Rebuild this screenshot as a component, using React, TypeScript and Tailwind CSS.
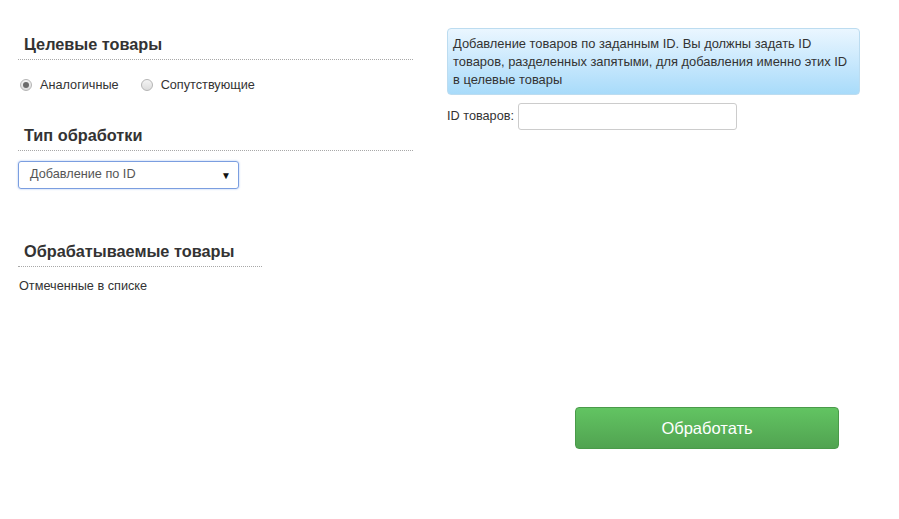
import React from "react";

function Radio({ checked, label }: { checked?: boolean; label: string }) {
  return (
    <label className="flex items-center gap-[8px]">
      <span className="w-[12px] h-[12px] rounded-full border border-[#b5b5b5] bg-gradient-to-b from-[#f4f4f4] to-[#dcdcdc] flex items-center justify-center">
        {checked && <span className="w-[6px] h-[6px] rounded-full bg-[#6b6b6b]" />}
      </span>
      <span>{label}</span>
    </label>
  );
}

function Heading({ children, w }: { children: React.ReactNode; w: string }) {
  return (
    <div className={`${w} border-b border-dotted border-[#a8a8a8] pl-[6px] pb-[5px]`}>
      <h2 className="text-[16.3px] leading-[20px] font-bold text-[#333]">{children}</h2>
    </div>
  );
}

export default function App() {
  return (
    <div
      className="w-[899px] h-[519px] bg-white text-[#333] text-[12px]"
      style={{ fontFamily: '"Liberation Sans", Arial, sans-serif' }}
    >
      <div className="flex pl-[18px] pt-[28px] gap-[34px]">
        <div className="w-[395px] flex flex-col">
          <div className="pt-[6px]">
            <Heading w="w-[395px]">Целевые товары</Heading>
          </div>
          <div className="flex items-center gap-[22px] pl-[2px] mt-[17px] text-[12.7px] leading-[16px]">
            <Radio checked label="Аналогичные" />
            <Radio label="Сопутствующие" />
          </div>
          <div className="mt-[32px]">
            <Heading w="w-[395px]">Тип обработки</Heading>
          </div>
          <div className="mt-[10px] w-[221px] h-[28px] rounded-[3px] border border-[#7b9ee0] shadow-[0_0_2px_rgba(90,140,230,0.6)] flex items-center justify-between pl-[11px] pr-[7px] text-[12.7px] text-[#555]">
            <span>Добавление по ID</span>
            <span className="text-[10px] text-[#111]">▼</span>
          </div>
          <div className="mt-[52px]">
            <Heading w="w-[244px]">Обрабатываемые товары</Heading>
          </div>
          <div className="mt-[11px] pl-[1px] text-[12.7px] leading-[16px]">Отмеченные в списке</div>
        </div>
        <div className="w-[413px] flex flex-col">
          <div className="rounded-[4px] border border-[#bcdcf0] bg-gradient-to-b from-[#eaf6ff] to-[#a8dbfa] px-[5px] pt-[6px] pb-[5px] text-[12.9px] leading-[18px] text-[#333]">
            Добавление товаров по заданным ID. Вы должны задать ID товаров, разделенных запятыми, для добавления именно этих ID в целевые товары
          </div>
          <div className="flex items-center mt-[8px] text-[12.7px]">
            <span>ID товаров:</span>
            <input className="ml-[4px] w-[219px] h-[27px] rounded-[3px] border border-[#cccccc] outline-none" />
          </div>
          <div className="mt-[277px] ml-[128px]">
            <button className="w-[264px] h-[42px] rounded-[4px] border border-[#4a9a4a] bg-gradient-to-b from-[#62c462] to-[#51a351] text-white text-[16.5px]">
              Обработать
            </button>
          </div>
        </div>
      </div>
    </div>
  );
}
